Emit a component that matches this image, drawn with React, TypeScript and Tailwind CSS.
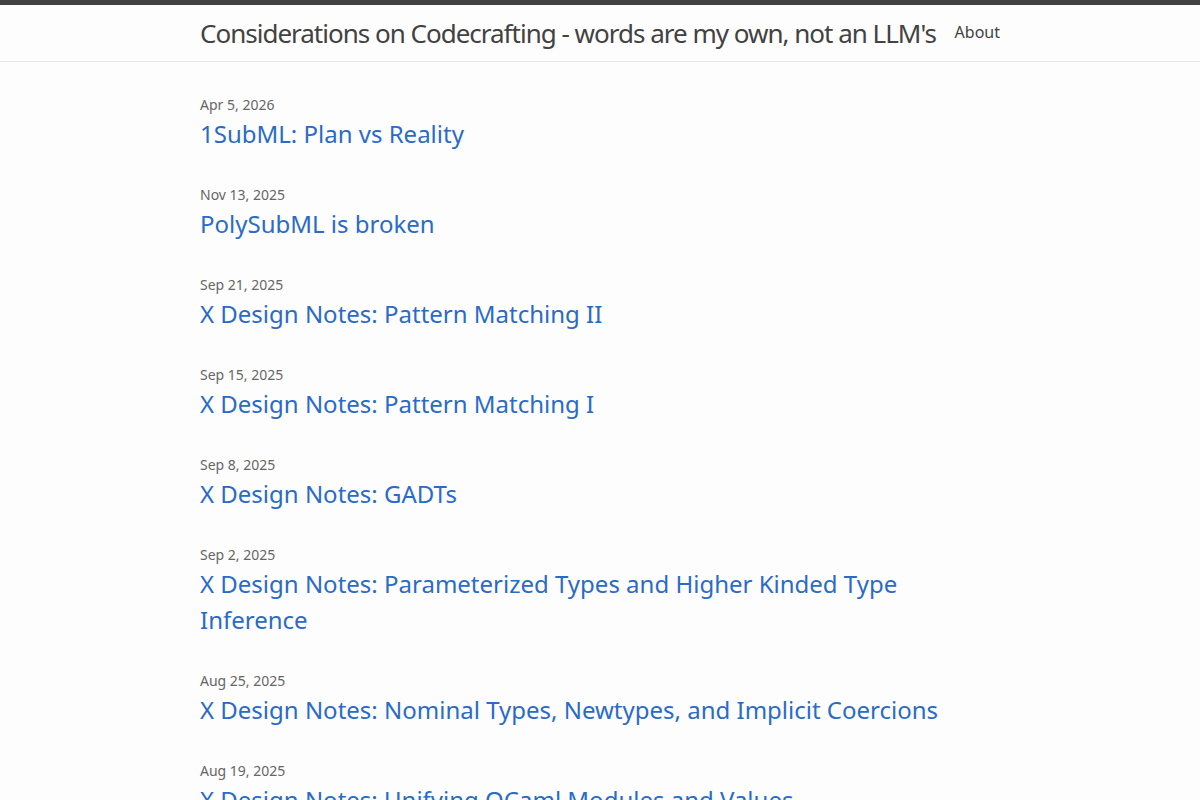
const posts: { date: string; title: string }[] = [
  { date: 'Apr 5, 2026', title: '1SubML: Plan vs Reality' },
  { date: 'Nov 13, 2025', title: 'PolySubML is broken' },
  { date: 'Sep 21, 2025', title: 'X Design Notes: Pattern Matching II' },
  { date: 'Sep 15, 2025', title: 'X Design Notes: Pattern Matching I' },
  { date: 'Sep 8, 2025', title: 'X Design Notes: GADTs' },
  { date: 'Sep 2, 2025', title: 'X Design Notes: Parameterized Types and Higher Kinded Type Inference' },
  { date: 'Aug 25, 2025', title: 'X Design Notes: Nominal Types, Newtypes, and Implicit Coercions' },
  { date: 'Aug 19, 2025', title: 'X Design Notes: Unifying OCaml Modules and Values' },
  { date: 'Aug 11, 2025', title: 'X Design Notes: Modules' },
]

export default function App() {
  return (
    <div className="min-h-screen bg-[#fdfdfd] text-[#111] font-['Noto_Sans',sans-serif]">
      <header className="border-t-[5px] border-[#424242] border-b border-b-[#e8e8e8]">
        <div className="mx-auto flex h-[56px] w-[800px] items-center justify-between">
          <a href="#" className="text-[26px] font-normal tracking-[-1px] text-[#424242]">
            Considerations on Codecrafting - words are my own, not an LLM's
          </a>
          <nav className="mb-[2px]">
            <a href="#" className="text-[16px] text-[#424242]">
              About
            </a>
          </nav>
        </div>
      </header>

      <main className="mx-auto w-[800px] pt-[30px]">
        <ul>
          {posts.map((p) => (
            <li key={p.title} className="mb-[30px]">
              <div className="pt-[2px] text-[14px] leading-[22px] text-[#666]">{p.date}</div>
              <h3 className="w-[740px]">
                <a href="#" className="block text-[24px] leading-[36px] text-[#2a6bc8]">
                  {p.title}
                </a>
              </h3>
            </li>
          ))}
        </ul>
      </main>
    </div>
  )
}
